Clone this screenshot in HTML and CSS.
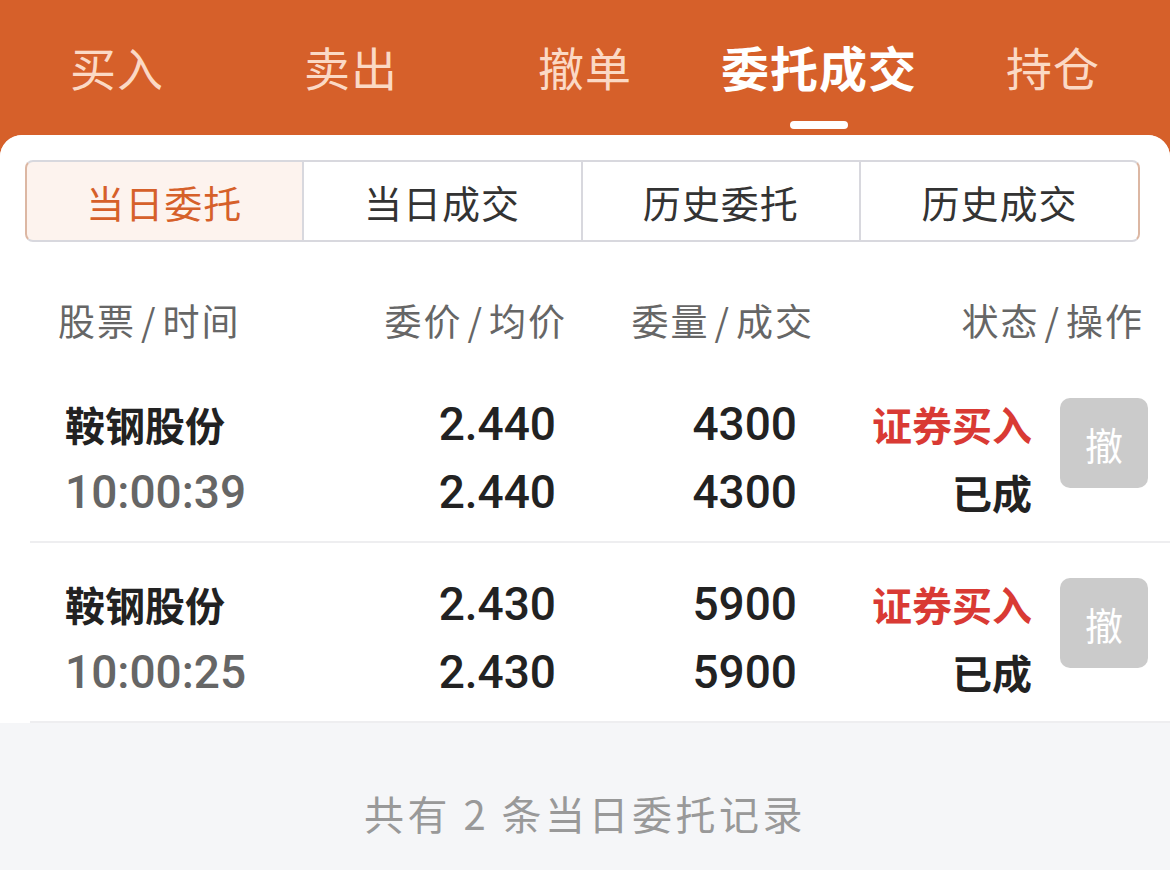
FILE: index.html
```html
<!DOCTYPE html>
<html lang="zh-CN">
<head>
<meta charset="utf-8">
<title>委托成交</title>
<link rel="stylesheet" href="styles.css">
</head>
<body>
<div class="app">
  <nav class="topnav">
    <div class="topnav-item">买入</div>
    <div class="topnav-item">卖出</div>
    <div class="topnav-item">撤单</div>
    <div class="topnav-item active">委托成交<span class="indicator"></span></div>
    <div class="topnav-item">持仓</div>
  </nav>
  <main class="card">
    <div class="seg">
      <div class="seg-item active">当日委托</div>
      <div class="seg-item">当日成交</div>
      <div class="seg-item">历史委托</div>
      <div class="seg-item">历史成交</div>
    </div>
    <div class="thead">
      <div class="th th-name">股票<span class="slash">/</span>时间</div>
      <div class="th th-price">委价<span class="slash">/</span>均价</div>
      <div class="th th-qty">委量<span class="slash">/</span>成交</div>
      <div class="th th-status">状态<span class="slash">/</span>操作</div>
    </div>
    <div class="row">
      <div class="cell cell-name"><div class="name">鞍钢股份</div><div class="time">10:00:39</div></div>
      <div class="cell cell-num"><div>2.440</div><div>2.440</div></div>
      <div class="cell cell-num"><div>4300</div><div>4300</div></div>
      <div class="cell cell-status"><div class="buy">证券买入</div><div class="done">已成</div></div>
      <div class="cell cell-op"><button class="cancel">撤</button></div>
    </div>
    <div class="row">
      <div class="cell cell-name"><div class="name">鞍钢股份</div><div class="time">10:00:25</div></div>
      <div class="cell cell-num"><div>2.430</div><div>2.430</div></div>
      <div class="cell cell-num"><div>5900</div><div>5900</div></div>
      <div class="cell cell-status"><div class="buy">证券买入</div><div class="done">已成</div></div>
      <div class="cell cell-op"><button class="cancel">撤</button></div>
    </div>
    <footer class="summary">共有 2 条当日委托记录</footer>
  </main>
</div>
</body>
</html>
```

FILE: styles.css
```css
* { box-sizing: border-box; }
html, body {
  margin: 0;
  padding: 0;
  height: 100%;
}
body {
  background: #d6602a;
  font-family: "Noto Sans CJK SC", "Noto Sans", sans-serif;
  color: #222;
  overflow: hidden;
}
.app {
  width: 1170px;
  height: 870px;
  display: flex;
  flex-direction: column;
  background: #d6602a;
}
.topnav {
  height: 135px;
  display: grid;
  grid-template-columns: repeat(5, 1fr);
  align-items: start;
}
.topnav-item {
  position: relative;
  text-align: center;
  font-size: 46px;
  line-height: 64px;
  padding-top: 34px;
  color: #fbd9c5;
  letter-spacing: 1px;
}
.topnav-item.active {
  color: #fff;
  font-weight: 700;
  font-size: 48px;
}
.indicator {
  position: absolute;
  left: 50%;
  top: 121px;
  width: 58px;
  height: 8px;
  margin-left: -29px;
  border-radius: 4px;
  background: #fff;
}
.card {
  flex: 1;
  background: #f5f6f8;
  border-radius: 22px 22px 0 0;
  overflow: hidden;
  display: flex;
  flex-direction: column;
}
.seg {
  background: #fff;
  padding: 25px 30px 0 25px;
  display: grid;
  grid-template-columns: repeat(4, 1fr);
}
.seg-item {
  height: 82px;
  display: flex;
  align-items: center;
  justify-content: center;
  font-size: 38px;
  letter-spacing: 1px;
  color: #333;
  border-top: 2px solid #d8d8de;
  border-bottom: 2px solid #d8d8de;
  border-right: 2px solid #d8d8de;
  background: #fff;
}
.seg-item:first-child {
  border-left: 2px solid #dcb7a3;
  border-radius: 8px 0 0 8px;
}
.seg-item:last-child {
  border-right: 2px solid #dcb7a3;
  border-radius: 0 8px 8px 0;
}
.seg-item.active {
  background: #fdf3ee;
  color: #d6602a;
}
.thead {
  background: #fff;
  height: 121px;
  padding: 53px 28px 0 58px;
  display: grid;
  grid-template-columns: 300px 207px 247px 1fr;
  font-size: 37px;
  line-height: 50px;
  letter-spacing: 2px;
  color: #666;
}
.th { white-space: nowrap; }
.slash { margin: 0 5px; }
.th-price, .th-qty, .th-status { text-align: right; margin-right: -2px; }
.row {
  background: #fff;
  height: 180px;
  padding: 27px 22px 0 65px;
  display: grid;
  grid-template-columns: 300px 191px 241px 235px 1fr;
  position: relative;
}
.row::after {
  content: "";
  position: absolute;
  left: 30px;
  right: 0;
  bottom: 0;
  height: 2px;
  background: #eeeef0;
}
.cell > div {
  height: 68px;
  line-height: 68px;
  white-space: nowrap;
}
.name {
  font-size: 40px;
  font-weight: 700;
  color: #222;
}
.time {
  font-family: "Roboto", "Liberation Sans", sans-serif;
  font-size: 46px;
  color: #666;
  font-weight: 500;
}
.cell-num {
  text-align: right;
  font-family: "Roboto", "Liberation Sans", sans-serif;
  font-size: 46px;
  font-weight: 500;
  color: #222;
}
.cell-status {
  text-align: right;
  font-size: 40px;
  font-weight: 700;
}
.buy { color: #d93a34; }
.done { color: #222; }
.cell-op {
  display: flex;
  justify-content: flex-end;
  padding-top: 8px;
}
.cancel {
  width: 88px;
  height: 90px;
  border: none;
  border-radius: 10px;
  background: #cbcbcb;
  color: #fff;
  font-family: "Noto Sans CJK SC", sans-serif;
  font-size: 38px;
  padding: 0;
}
.summary {
  flex: 1;
  display: flex;
  align-items: center;
  justify-content: center;
  padding-bottom: 6px;
  padding-top: 38px;
  font-size: 40px;
  letter-spacing: 3.5px;
  color: #999;
}
```
